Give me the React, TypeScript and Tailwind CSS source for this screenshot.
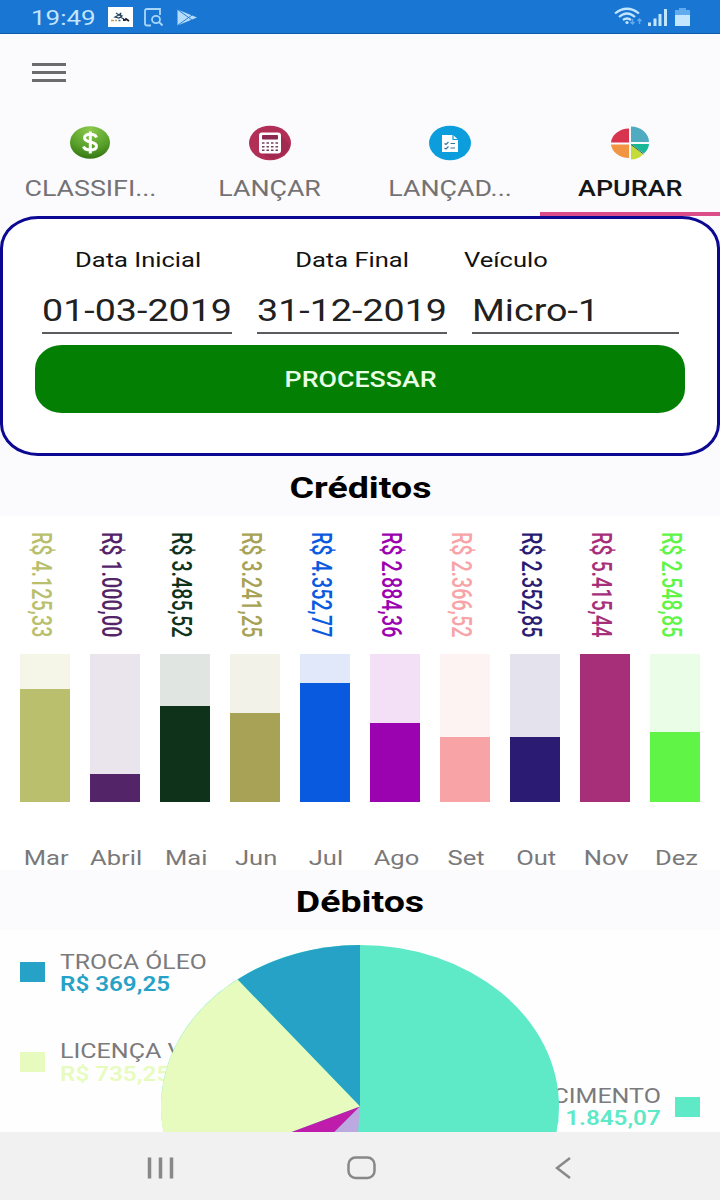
import React from "react";

type StretchProps = { children: React.ReactNode; className?: string };

/* Wide-set label: one line of text, drawn wider than the font's own proportions. */
function Wide({ children, className = "" }: StretchProps) {
  return (
    <span className={`inline-block whitespace-nowrap scale-x-[1.234] ${className}`}>{children}</span>
  );
}

function LegendText({ children, className = "" }: StretchProps) {
  return (
    <span className={`inline-block whitespace-nowrap ${className}`}>{children}</span>
  );
}

const months = [
  { name: "Mar", value: "R$ 4.125,33", text: "text-[#b9bf6c]", fill: "bg-[#b9bf6c]", track: "bg-[#f5f6e8]", height: 113 },
  { name: "Abril", value: "R$ 1.000,00", text: "text-[#542468]", fill: "bg-[#542468]", track: "bg-[#eae5ed]", height: 28 },
  { name: "Mai", value: "R$ 3.485,52", text: "text-[#0f321b]", fill: "bg-[#0f321b]", track: "bg-[#e0e5e2]", height: 96 },
  { name: "Jun", value: "R$ 3.241,25", text: "text-[#a7a255]", fill: "bg-[#a7a255]", track: "bg-[#f2f2e8]", height: 89 },
  { name: "Jul", value: "R$ 4.352,77", text: "text-[#0a5ae0]", fill: "bg-[#0a5ae0]", track: "bg-[#e0e8fa]", height: 119 },
  { name: "Ago", value: "R$ 2.884,36", text: "text-[#9b02b0]", fill: "bg-[#9b02b0]", track: "bg-[#f3dff6]", height: 79 },
  { name: "Set", value: "R$ 2.366,52", text: "text-[#f8a4a7]", fill: "bg-[#f8a4a7]", track: "bg-[#fef3f3]", height: 65 },
  { name: "Out", value: "R$ 2.352,85", text: "text-[#2c1b73]", fill: "bg-[#2c1b73]", track: "bg-[#e4e2ed]", height: 65 },
  { name: "Nov", value: "R$ 5.415,44", text: "text-[#a72f79]", fill: "bg-[#a72f79]", track: "bg-[#f3e4ee]", height: 148 },
  { name: "Dez", value: "R$ 2.548,85", text: "text-[#60f447]", fill: "bg-[#60f447]", track: "bg-[#eafee7]", height: 70 },
];

function StatusBar() {
  return (
    <header className="flex h-[34px] items-center border-b border-[#1259a6] bg-[#1976d2] pl-[31px] pr-[30px] pt-px text-[#c3e6ff]">
      <Wide className="origin-left pt-[3px] text-[21px] leading-none">19:49</Wide>
      <svg className="ml-[25px] shrink-0" width="25" height="20" viewBox="0 0 25 20">
        <rect width="25" height="20" fill="#fdfefe" />
        <path d="M8 6l3 2 2-2-1 3M7 10l4-2 3 1-3 2zM12 10l4 2" stroke="#27455f" strokeWidth="1.2" fill="none" />
        <path d="M3 13.5h3M7 13.5h2" stroke="#c99b55" strokeWidth="1.5" />
        <path d="M10.500 13.500h2" stroke="#2c6da8" strokeWidth="1.500" />
        <path d="M15 13h2l1-1 3 2" stroke="#223" strokeWidth="1.800" fill="none" />
      </svg>
      <svg className="ml-[11px] shrink-0" width="20" height="19" viewBox="0 0 20 19" fill="none" stroke="#a8d7fb" strokeWidth="1.800">
        <path d="M7 17.500H3Q1 17.500 1 15.500V3Q1 1 3 1h13v6" />
        <ellipse cx="12" cy="11.500" rx="4" ry="3.600" />
        <path d="M15 14l3.500 3.500" />
      </svg>
      <svg className="ml-[13px] shrink-0" width="21" height="17" viewBox="0 0 21 17">
        <path d="M0.500 0.500L20 8.500 0.500 16.500z" fill="#b5dcfb" />
        <path d="M0.500 0.500L15 11M0.500 16.500L15 6" stroke="#1976d2" strokeWidth="0.900" />
      </svg>
      <div className="ml-auto flex items-center">
        <svg width="30" height="20" viewBox="0 0 30 20" fill="none" stroke="#c3e6ff" strokeWidth="2.200">
          <path d="M1 6.500Q13 -3 25 6.500M5 10Q13 3 21 10M9 13Q13 10 17 13" />
          <circle cx="13" cy="15.500" r="1.600" fill="#c3e6ff" stroke="none" />
          <path d="M18.500 12v5M16.500 15l2 2 2-2M25.500 17v-5M23.500 14l2-2 2 2" stroke="#5fabee" strokeWidth="1.500" />
        </svg>
        <svg className="ml-1" width="19" height="17" viewBox="0 0 19 17" fill="#c3e6ff">
          <path d="M0 13.500h3V17H0zM5.500 9.500h3V17h-3zM10.500 5h3v12h-3zM16 0h3v17h-3z" />
        </svg>
        <svg className="ml-2" width="15" height="18" viewBox="0 0 15 18">
          <path d="M4 0h7v2h4v5H0V2h4z" fill="#5fabee" />
          <rect y="7" width="15" height="11" fill="#c3e6ff" />
        </svg>
      </div>
    </header>
  );
}

function MoneyIcon() {
  return (
    <svg width="42" height="36" viewBox="0 0 42 36">
      <defs>
        <radialGradient id="coin" cx="0.500" cy="0.100" r="0.950">
          <stop offset="0" stopColor="#8cc94c" />
          <stop offset="0.600" stopColor="#58a02a" />
          <stop offset="1" stopColor="#2f7010" />
        </radialGradient>
      </defs>
      <ellipse cx="21" cy="17.500" rx="20" ry="16.200" fill="url(#coin)" />
      <path d="M27.500 12.500C26 8.500 15.500 8 15.500 12.800C15.500 18.500 27.500 15.500 27.500 21.300C27.500 26.500 16 26 14.500 21.500M21.300 6.500v22" fill="none" stroke="#fff" strokeWidth="3" />
    </svg>
  );
}

function CalculatorIcon() {
  return (
    <svg width="42" height="36" viewBox="0 0 42 36">
      <ellipse cx="21" cy="18" rx="21" ry="17.300" fill="#b12f57" />
      <path d="M32 10L41 20Q38 31 24 34.500L12 28z" fill="#9a284e" opacity="0.700" />
      <rect x="10" y="7.500" width="22" height="21" rx="3" fill="#fff" />
      <rect x="13" y="10" width="16" height="4.500" rx="0.800" fill="#8d2850" />
      <path d="M13 18h16M13 21.700h16M13 25.300h16" stroke="#74405a" strokeWidth="1.600" strokeDasharray="2.500 2" />
    </svg>
  );
}

function ListIcon() {
  return (
    <svg width="42" height="36" viewBox="0 0 42 36">
      <ellipse cx="21" cy="18" rx="21" ry="17.300" fill="#0c9edc" />
      <path d="M13 10h11l5 4.500V27H13z" fill="#fff" />
      <path d="M24 10v4.500h5" fill="none" stroke="#0c9edc" strokeWidth="1.200" />
      <path d="M15.500 18.500l1.500 1 2.500-2.500M21.500 18.500h4.500M15.500 23l1.500 1 2.500-2.500M21.500 23h4.500" fill="none" stroke="#38779c" strokeWidth="1.200" />
    </svg>
  );
}

function PieIcon() {
  return (
    <svg width="40" height="36" viewBox="0 0 40 36">
      <path d="M19 17.500V3.500A18.500 14.800 0 0 0 1 17.500z" fill="#d8344f" />
      <path d="M19 19.500H1A18.500 14.800 0 0 0 19 33z" fill="#f19542" />
      <path d="M21 17V1.500A18 15.800 0 0 1 39 17z" fill="#4eabc0" />
      <path d="M21 19H39A18 15.500 0 0 1 34 28.500z" fill="#18b795" />
      <path d="M21 19.500L33 29.500Q28 34.500 21 34.500z" fill="#c5dc38" />
      <path d="M21 19.500L33.500 29" stroke="#27624f" strokeWidth="1" />
    </svg>
  );
}

const tabs = [
  { label: "CLASSIFI...", Icon: MoneyIcon },
  { label: "LANÇAR", Icon: CalculatorIcon },
  { label: "LANÇAD...", Icon: ListIcon },
  { label: "APURAR", Icon: PieIcon, active: true },
];

function AppHeader() {
  return (
    <div className="flex h-[182px] flex-col bg-[#fbfafc]">
      <button className="ml-8 mt-[27px] flex h-[22px] w-[34px] flex-col justify-center gap-[5px]" aria-label="Menu">
        <span className="h-[3px] w-full bg-[#6c6b6d]" />
        <span className="h-[3px] w-full bg-[#6c6b6d]" />
        <span className="h-[3px] w-full bg-[#6c6b6d]" />
      </button>
      <nav className="mt-[42px] grid h-[91px] grid-cols-4">
        {tabs.map(({ label, Icon, active }) => (
          <div key={label} className={active ? "flex flex-col items-center border-b-4 border-[#da4d89] text-[#161616]" : "flex flex-col items-center text-[#737274]"}>
            <Icon />
            <Wide className={active ? "mt-[14px] text-[21.800px] font-medium leading-7" : "mt-[14px] text-[21.700px] leading-7"}>{label}</Wide>
          </div>
        ))}
      </nav>
    </div>
  );
}

function FilterCard() {
  return (
    <section className="h-[240px] rounded-[38px/32px] border-[3px] border-[#0b0894] bg-white px-8 pt-[29px]">
      <div className="flex text-[20.700px] leading-6 text-[#111]">
        <div className="flex w-[206px] justify-center"><Wide>Data Inicial</Wide></div>
        <div className="flex w-[223px] justify-center"><Wide>Data Final</Wide></div>
        <Wide className="origin-left">Veículo</Wide>
      </div>
      <div className="mt-[13px] flex gap-[25px] pl-[7px] text-[30.500px] leading-[52px] text-[#212121]">
        <div className="flex h-[49px] w-[190px] justify-center border-b-2 border-[#5c5c60]"><Wide>01-03-2019</Wide></div>
        <div className="flex h-[49px] w-[190px] justify-center border-b-2 border-[#5c5c60]"><Wide>31-12-2019</Wide></div>
        <div className="flex h-[49px] w-[207px] border-b-2 border-[#5c5c60]"><Wide className="origin-left">Micro-1</Wide></div>
      </div>
      <button className="mt-[11px] flex h-[68px] w-full items-center justify-center rounded-[27px/24px] bg-[#038003] pl-px pt-[3px] text-[21.700px] font-medium text-[#e9ffe6]">
        <Wide>PROCESSAR</Wide>
      </button>
    </section>
  );
}

function SectionTitle({ children }: { children: string }) {
  return (
    <h2 className="flex h-[60px] items-center justify-center bg-[#fbfafc] pt-[3px] text-[30.400px] font-bold text-black">
      <Wide>{children}</Wide>
    </h2>
  );
}

function CreditsChart() {
  return (
    <section className="flex h-[354px] gap-5 bg-white px-5 pt-4">
      {months.map((m) => (
        <div key={m.name} className="flex w-[50px] shrink-0 flex-col items-center">
          <div className="flex h-[122px] w-full shrink-0 items-start justify-center pr-2">
            <span className={`origin-top-left scale-y-[0.702] whitespace-nowrap text-[28px] font-medium leading-8 [writing-mode:vertical-rl] ${m.text}`}>{m.value}</span>
          </div>
          <div className={`flex h-[148px] w-full shrink-0 flex-col justify-end ${m.track}`}>
            <div className={`w-full shrink-0 ${m.fill}`} style={{ height: m.height }} />
          </div>
          <Wide className="ml-[2px] mt-[42px] text-[20.700px] leading-7 text-[#79787a]">{m.name}</Wide>
        </div>
      ))}
    </section>
  );
}

function DebitsChart() {
  return (
    <section className="relative flex h-[202px] justify-between overflow-hidden bg-[#fefefe] px-5 text-[20.700px] leading-[22px]">
      <div className="flex flex-col">
        <div className="mt-[21px] flex h-[90px] gap-[15px]">
          <span className="mt-[11px] h-5 w-[25px] bg-[#25a2c6]" />
          <div className="flex flex-col items-start">
            <LegendText className="origin-left scale-x-[1.195] text-[#7b7a7c]">TROCA ÓLEO</LegendText>
            <LegendText className="origin-left scale-x-[1.170] font-semibold text-[#25a2c6]">R$ 369,25</LegendText>
          </div>
        </div>
        <div className="flex gap-[15px]">
          <span className="mt-[11px] h-5 w-[25px] bg-[#e8fbbe]" />
          <div className="-mt-px flex flex-col items-start">
            <LegendText className="origin-left scale-x-[1.210] text-[#7b7a7c]">LICENÇA VEÍCULO</LegendText>
            <LegendText className="mt-px origin-left scale-x-[1.170] font-semibold text-[#e8fbbe]">R$ 735,25</LegendText>
          </div>
        </div>
      </div>
      <div className="mt-[155px] flex items-start gap-[14px]">
        <div className="flex flex-col items-end">
          <LegendText className="origin-right scale-x-[1.210] text-[#7b7a7c]">ABASTECIMENTO</LegendText>
          <LegendText className="origin-right scale-x-[1.170] font-semibold text-[#5ee9c7]">R$ 1.845,07</LegendText>
        </div>
        <span className="mt-[12px] h-5 w-[25px] bg-[#5ee9c7]" />
      </div>
      <svg className="absolute left-[161px] top-[15px]" width="398" height="323" viewBox="-199 -161.500 398 323">
        <ellipse rx="199" ry="161.500" fill="#5ee9c7" />
        <path d="M0 0V-161.500A199 161.500 0 0 0 -122.500 -127z" fill="#25a2c6" />
        <path d="M0 0L-122.500 -127A199 161.500 0 0 0 -181 67.500z" fill="#e8fbbe" />
        <path d="M0 0L-181 67.500L-125 125z" fill="#c01cac" />
        <path d="M0 0L-125 125L-12 161z" fill="#bba9df" />
      </svg>
    </section>
  );
}

function NavigationBar() {
  return (
    <footer className="flex h-[68px] items-center bg-[#f1f1f2] pl-[147px] pt-1">
      <svg width="27" height="22" viewBox="0 0 27 22" stroke="#888" strokeWidth="3.500">
        <path d="M2.500 0.500v21M13.500 0.500v21M24.500 0.500v21" />
      </svg>
      <svg className="ml-[173px]" width="30" height="24" viewBox="0 0 30 24">
        <rect x="1.500" y="1.500" width="26" height="20.500" rx="7" fill="none" stroke="#888" strokeWidth="2.500" />
      </svg>
      <svg className="ml-[178px]" width="16" height="22" viewBox="0 0 16 22" fill="none" stroke="#888" strokeWidth="2.500">
        <path d="M15 1L2 11l13 10" />
      </svg>
    </footer>
  );
}

export default function App() {
  return (
    <main className="h-[1200px] w-[720px] overflow-hidden bg-[#fbfafc] font-[Roboto,'Liberation_Sans',sans-serif]">
      <StatusBar />
      <AppHeader />
      <FilterCard />
      <SectionTitle>Créditos</SectionTitle>
      <CreditsChart />
      <SectionTitle>Débitos</SectionTitle>
      <DebitsChart />
      <NavigationBar />
    </main>
  );
}
